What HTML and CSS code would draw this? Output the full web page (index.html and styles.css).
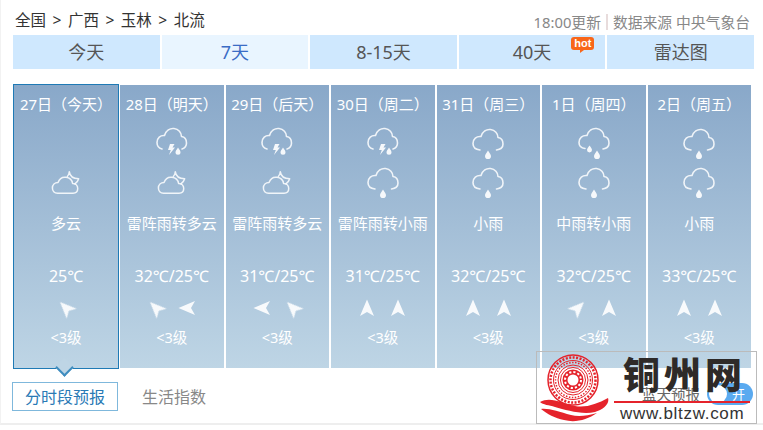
FILE: index.html
```html
<!DOCTYPE html>
<html lang="zh-CN">
<head>
    <meta charset="UTF-8">
    <meta name="viewport" content="width=device-width, initial-scale=1.0">
    <title>北流天气预报</title>
    <link rel="stylesheet" href="styles.css">
</head>
<body>
    <svg class="defs" width="0" height="0">
        <symbol id="cloud-rain" viewBox="0 0 32 32">
            <path class="line" d="M8 23C3.500 22.500 1 20 1 16.500C1 12 4.500 9 9 9.500C10.500 4.500 14.500 2 18.500 2.500C23 3 26 6.500 26 10.500C29.500 11 31 14 31 17C31 20.500 28.500 22.500 24.500 23"/>
            <path class="solid" d="M16 23.500C17.500 26 19 27.500 19 29.200A3 3 0 0 1 13 29.200C13 27.500 14.500 26 16 23.500Z"/>
        </symbol>
        <symbol id="cloud-two-drops" viewBox="0 0 32 32">
            <path class="line" d="M7 21.500C3 21 1 18.500 1 15.500C1 11 4.500 8 9 8.500C10.500 3.500 14.500 1 18.500 1.500C23 2 26 5.500 26 9.500C29.500 10 31 13 31 16C31 19.500 28.500 21.500 25 22"/>
            <path class="solid" d="M11.500 18.500C12.800 20.500 14 21.500 14 23A2.500 2.500 0 0 1 9 23C9 21.500 10.300 20.500 11.500 18.500Z"/>
            <path class="solid" d="M19 23.500C20.500 26 22 27.500 22 29.200A3 3 0 0 1 16 29.200C16 27.500 17.500 26 19 23.500Z"/>
        </symbol>
        <symbol id="cloud-thunder" viewBox="0 0 32 32">
            <path class="line" d="M6 22C2.500 21 1 18.500 1 15.500C1 11 4.500 8 8.500 8.500C10 3.500 14 1 18 1.500C22.500 2 25.500 5.500 25.500 9.500C29 10 30.500 13 30.500 16C30.500 19 29 21 26 22"/>
            <path class="solid" d="M14 17H18.500L16.500 20.500H19L13 28L14.800 23H12Z"/>
            <path class="solid" d="M22 20.500C23.300 22.500 24.500 23.800 24.500 25.300A2.500 2.500 0 0 1 19.500 25.300C19.500 23.800 20.800 22.500 22 20.500Z"/>
        </symbol>
        <symbol id="moon-cloud" viewBox="0 0 32 32">
            <path class="line" d="M7 28C3.500 28 1.500 25.500 1.500 22.500C1.500 19 4 16.500 7.500 16.500C9 12.500 12.500 10.500 16 11C20 11.500 22.500 14.500 23 17.500C26.500 17.500 28.500 20 28.500 23C28.500 26 26.500 28 23.500 28Z"/>
            <path class="line" d="M17.500 10C18.800 8.500 19.500 7 19.500 5C20 9 23 12.500 29.500 12.500C29 14.500 27.500 16.500 25.500 18"/>
        </symbol>
        <symbol id="wind" viewBox="0 0 20 20">
            <path class="solid" d="M10 1.500L17 18L10 14L3 18Z"/>
        </symbol>
    </svg>

    <div class="page">
        <div class="topbar">
            <div class="crumbs">
                <span>全国</span><i>&gt;</i><span>广西</span><i>&gt;</i><span>玉林</span><i>&gt;</i><span>北流</span>
            </div>
            <div class="source">
                <span>18:00更新</span><b></b><span>数据来源 中央气象台</span>
            </div>
        </div>

        <nav class="tabs">
            <a>今天</a>
            <a class="on">7天</a>
            <a>8-15天</a>
            <a class="has-hot">40天<em class="hot">hot</em></a>
            <a>雷达图</a>
        </nav>

        <div class="forecast">
            <div class="day today">
                <div class="date">27日（今天）</div>
                <div class="icons">
                    <div class="slot"></div>
                    <div class="slot"><svg class="moon"><use href="#moon-cloud"/></svg></div>
                </div>
                <div class="desc">多云</div>
                <div class="temp">25℃</div>
                <div class="winds"><svg class="nw"><use href="#wind"/></svg></div>
                <div class="level">&lt;3级</div>
            </div>
            <div class="day">
                <div class="date">28日（明天）</div>
                <div class="icons">
                    <div class="slot"><svg><use href="#cloud-thunder"/></svg></div>
                    <div class="slot"><svg class="moon"><use href="#moon-cloud"/></svg></div>
                </div>
                <div class="desc">雷阵雨转多云</div>
                <div class="temp">32℃/25℃</div>
                <div class="winds"><svg class="nw"><use href="#wind"/></svg><svg class="w"><use href="#wind"/></svg></div>
                <div class="level">&lt;3级</div>
            </div>
            <div class="day">
                <div class="date">29日（后天）</div>
                <div class="icons">
                    <div class="slot"><svg><use href="#cloud-thunder"/></svg></div>
                    <div class="slot"><svg class="moon"><use href="#moon-cloud"/></svg></div>
                </div>
                <div class="desc">雷阵雨转多云</div>
                <div class="temp">31℃/25℃</div>
                <div class="winds"><svg class="w"><use href="#wind"/></svg><svg class="nw"><use href="#wind"/></svg></div>
                <div class="level">&lt;3级</div>
            </div>
            <div class="day">
                <div class="date">30日（周二）</div>
                <div class="icons">
                    <div class="slot"><svg><use href="#cloud-thunder"/></svg></div>
                    <div class="slot"><svg><use href="#cloud-rain"/></svg></div>
                </div>
                <div class="desc">雷阵雨转小雨</div>
                <div class="temp">31℃/25℃</div>
                <div class="winds"><svg><use href="#wind"/></svg><svg><use href="#wind"/></svg></div>
                <div class="level">&lt;3级</div>
            </div>
            <div class="day">
                <div class="date">31日（周三）</div>
                <div class="icons">
                    <div class="slot"><svg><use href="#cloud-rain"/></svg></div>
                    <div class="slot"><svg><use href="#cloud-rain"/></svg></div>
                </div>
                <div class="desc">小雨</div>
                <div class="temp">32℃/25℃</div>
                <div class="winds"><svg><use href="#wind"/></svg><svg><use href="#wind"/></svg></div>
                <div class="level">&lt;3级</div>
            </div>
            <div class="day">
                <div class="date">1日（周四）</div>
                <div class="icons">
                    <div class="slot"><svg><use href="#cloud-two-drops"/></svg></div>
                    <div class="slot"><svg><use href="#cloud-rain"/></svg></div>
                </div>
                <div class="desc">中雨转小雨</div>
                <div class="temp">32℃/25℃</div>
                <div class="winds"><svg class="ne"><use href="#wind"/></svg><svg><use href="#wind"/></svg></div>
                <div class="level">&lt;3级</div>
            </div>
            <div class="day">
                <div class="date">2日（周五）</div>
                <div class="icons">
                    <div class="slot"><svg><use href="#cloud-rain"/></svg></div>
                    <div class="slot"><svg><use href="#cloud-rain"/></svg></div>
                </div>
                <div class="desc">小雨</div>
                <div class="temp">33℃/25℃</div>
                <div class="winds"><svg><use href="#wind"/></svg><svg><use href="#wind"/></svg></div>
                <div class="level">&lt;3级</div>
            </div>
        </div>

        <div class="subbar">
            <a class="sub on">分时段预报</a>
            <a class="sub">生活指数</a>
            <span class="sky">蓝天预报</span>
            <span class="switch"><i></i>开</span>
        </div>
    </div>

    <div class="stamp">
        <svg class="stamp-logo" viewBox="0 0 72 72">
            <g fill="none" stroke="#e5232b">
                <circle cx="36" cy="28" r="25" stroke-width="1.500"/>
                <circle cx="36" cy="28" r="22.500" stroke-width="2.500" stroke-dasharray="2 1.500"/>
                <circle cx="36" cy="28" r="19.500" stroke-width="1"/>
                <circle cx="36" cy="28" r="17.500" stroke-width="1.500" stroke-dasharray="1.500 1.500"/>
                <circle cx="36" cy="28" r="15" stroke-width="1"/>
                <circle cx="36" cy="28" r="12.500" stroke-width="1"/>
            </g>
            <circle cx="36" cy="28" r="10.500" fill="#e5232b"/>
            <circle cx="36" cy="28" r="5.500" fill="#fff"/>
            <circle cx="36" cy="28" r="8" fill="none" stroke="#fff" stroke-width="2" stroke-dasharray="2.200 2"/>
            <path fill="#e5232b" d="M3 50C13 44 25 51 38 54C49 56 60 52 71 46C73 52 66 58 58 60C45 63 29 58 18 55C12 53 6 53 3 50Z"/>
            <path fill="#e5232b" d="M4 57C12 56 22 60 34 63C41 65 50 64 60 61C50 68 38 71 27 68C18 66 10 62 4 57Z"/>
        </svg>
        <div class="stamp-text">
            <div class="stamp-name">铜州网</div>
            <div class="stamp-rule"></div>
            <div class="stamp-url">www.bltzw.com</div>
        </div>
    </div>
</body>
</html>
```

FILE: styles.css
```css
* {
    box-sizing: border-box;
}
body {
    margin: 0;
    background-color: #fff;
    font-family: "Noto Sans", "Noto Sans CJK SC", sans-serif;
    position: relative;
}
.defs {
    position: absolute;
}
.line {
    fill: none;
    stroke: #fff;
    stroke-width: 1.6;
    stroke-linecap: round;
    stroke-linejoin: round;
    opacity: 0.85;
}
.solid {
    fill: #fff;
    opacity: 0.9;
}
.page {
    width: 763px;
    height: 425px;
    padding: 0 9px 0 12px;
    border-left: 1px solid #f2f2f2;
    border-bottom: 2px solid #eee;
}

/* top line */
.topbar {
    height: 35px;
    padding: 8px 4px 0 2px;
    display: flex;
    justify-content: space-between;
}
.crumbs {
    font-size: 15.500px;
    line-height: 24px;
    color: #333;
}
.crumbs i {
    font-style: normal;
    margin: 0 6.500px;
}
.source {
    font-size: 14.800px;
    line-height: 24px;
    color: #888;
    display: flex;
    align-items: center;
}
.source b {
    width: 2px;
    height: 16px;
    margin: 0 5px;
    background-color: #e8dcdc;
}

/* tabs */
.tabs {
    display: flex;
    gap: 2px;
    height: 34px;
}
.tabs a {
    flex: 1;
    position: relative;
    text-align: center;
    font-size: 18px;
    line-height: 34px;
    color: #555;
    background-color: #cfe8fe;
}
.tabs a.on {
    color: #3a6cc5;
    background-color: #e9f5ff;
}
.hot {
    position: absolute;
    top: 2px;
    right: 11px;
    width: 23px;
    height: 13px;
    border-radius: 3px;
    background-color: #f8661a;
    color: #fff;
    font: bold 11px/12px "Liberation Sans", sans-serif;
}
.hot::after {
    content: "";
    position: absolute;
    left: 9px;
    top: 13px;
    border-top: 3px solid #f8661a;
    border-right: 4px solid transparent;
}

/* 7 day columns */
.forecast {
    display: flex;
    align-items: center;
    gap: 2px;
    margin-top: 15px;
    margin-right: 3px;
    height: 285px;
}
.day {
    flex: 1;
    height: 283px;
    color: #fff;
    text-align: center;
    background: linear-gradient(#89a8c9, #bed5e5);
}
.today {
    flex: none;
    position: relative;
    width: 106px;
    height: 285px;
    margin-right: -1px;
    border: 1px solid #1f7ab5;
}
.today::after {
    content: "";
    position: absolute;
    left: 44px;
    bottom: -6px;
    width: 11px;
    height: 11px;
    background-color: #bed5e5;
    border-right: 2px solid #3f8dbf;
    border-bottom: 2px solid #3f8dbf;
    transform: rotate(45deg);
}
.date {
    height: 38px;
    font-size: 15px;
    line-height: 38px;
    white-space: nowrap;
}
.icons {
    height: 79px;
}
.slot {
    height: 39px;
    display: flex;
    justify-content: center;
    align-items: center;
}
.slot svg {
    width: 32px;
    height: 32px;
}
.slot svg.moon {
    width: 30px;
    height: 30px;
}
.desc {
    height: 42px;
    font-size: 15px;
    line-height: 42px;
    white-space: nowrap;
}
.temp {
    height: 36px;
    margin-top: 14px;
    font-size: 16px;
    line-height: 36px;
    white-space: nowrap;
}
.winds {
    height: 28px;
    display: flex;
    justify-content: center;
    align-items: center;
    gap: 11px;
}
.winds svg {
    width: 20px;
    height: 20px;
    filter: blur(0.4px);
}
.winds .nw {
    transform: rotate(-45deg);
}
.winds .ne {
    transform: rotate(45deg);
}
.winds .w {
    transform: rotate(-90deg);
}
.level {
    height: 30px;
    font-size: 14.500px;
    line-height: 30px;
}

/* row under the columns */
.subbar {
    display: flex;
    align-items: center;
    margin: 13px 1px 0 -1px;
    height: 29px;
}
.sub {
    font-size: 16px;
    line-height: 27px;
    padding: 1px 12px 0;
    height: 29px;
    color: #888;
    border: 1px solid transparent;
    margin-right: 11px;
}
.sub.on {
    color: #2a7ab5;
    border-color: #7fb8dc;
}
.sky {
    align-self: flex-start;
    margin-top: 1px;
    margin-left: auto;
    font-size: 14.500px;
    line-height: 22px;
    color: #666;
}
.switch {
    align-self: flex-start;
    position: relative;
    width: 46px;
    height: 22px;
    margin-top: 1px;
    margin-left: 7px;
    padding-left: 25px;
    border-radius: 11px;
    background-color: #5aaaf0;
    color: #fff;
    font-size: 13px;
    line-height: 22px;
}
.switch i {
    position: absolute;
    left: 2px;
    top: 2px;
    width: 18px;
    height: 18px;
    border-radius: 50%;
    background-color: #fff;
}

/* site stamp sitting over the page */
.stamp {
    position: absolute;
    left: 536px;
    top: 351px;
    width: 221px;
    height: 73px;
    border: 1px solid #bbb;
    display: flex;
}
.stamp-logo {
    width: 72px;
    height: 72px;
    flex: none;
}
.stamp-text {
    margin-left: 5px;
    width: 136px;
}
.stamp-name {
    height: 49px;
    padding-left: 9px;
    font-size: 37px;
    line-height: 46px;
    font-weight: 900;
    letter-spacing: 4px;
    color: #2e2a28;
    white-space: nowrap;
}
.stamp-rule {
    height: 2px;
    background-color: #e5232b;
}
.stamp-url {
    padding-left: 6px;
    font: 17px/22px "Liberation Sans", sans-serif;
    letter-spacing: 0.700px;
    color: #333;
    white-space: nowrap;
}
```
